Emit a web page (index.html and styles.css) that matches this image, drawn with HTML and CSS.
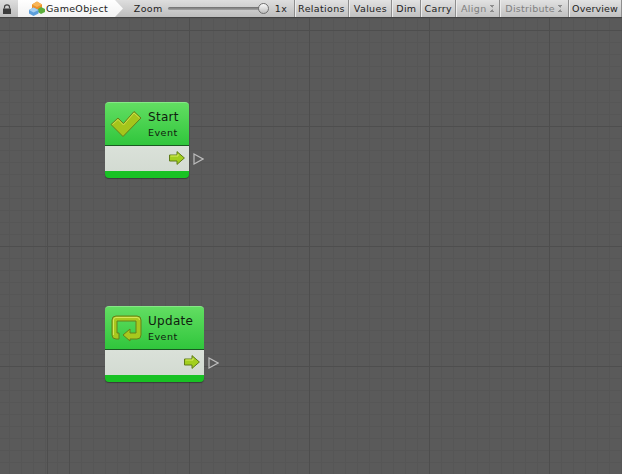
FILE: index.html
```html
<!DOCTYPE html>
<html lang="en">
<head>
<meta charset="utf-8">
<title>Graph</title>
<link rel="stylesheet" href="styles.css">
</head>
<body>
<div class="window">
  <header class="toolbar">
    <div class="lock">
      <svg width="10" height="10" viewBox="0 0 10 10"><path d="M2.500 4.500V3C2.500 1.600 3.500 .8 5 .8s2.500.8 2.500 2.200V4.500" fill="none" stroke="#444" stroke-width="1.200"/><rect x="1" y="4.500" width="8" height="5.500" fill="#3c3c3c"/></svg>
    </div>
    <div class="crumb">
      <svg class="cube" width="16" height="15" viewBox="0 0 16 15">
        <path d="M3 3.500 8 .5 13 3.500V7.500L8 10 3 7.500Z" fill="#ee9128"/>
        <path d="M3 3.500 8 6 13 3.500 8 .5Z" fill="#f8b658"/>
        <path d="M9 8 12 6 16 8V11L12 13 9 11Z" fill="#5cae3c"/>
        <path d="M0 9 4.500 6.500 9.500 9V12.500L4.500 15 0 12.500Z" fill="#5c9fdc"/>
        <path d="M0 9 4.500 11.500 9.500 9 4.500 6.500Z" fill="#a6cff0"/>
      </svg>
      <span class="crumb-label">GameObject</span>
    </div>
    <div class="zoom">
      <span class="zoom-label">Zoom</span>
      <div class="slider"><div class="thumb"></div></div>
      <span class="zoom-value">1x</span>
    </div>
    <button class="tool tool-relations">Relations</button>
    <button class="tool tool-values">Values</button>
    <button class="tool tool-dim">Dim</button>
    <button class="tool tool-carry">Carry</button>
    <button class="tool tool-align off">Align <span class="updown"></span></button>
    <button class="tool tool-distribute off">Distribute <span class="updown"></span></button>
    <button class="tool tool-overview">Overview</button>
  </header>
  <main class="canvas">
    <section class="node node-start">
      <div class="node-head">
        <svg class="node-icon" width="32" height="28" viewBox="0 0 32 28">
          <path d="M1 14.500 8 8l5.500 5.500L24 1.500l7 6.500L13 26.500Z" fill="#a4c51c" stroke="#66801a" stroke-width="1" stroke-linejoin="round"/>
          <path d="M2.500 14.500 8 9.500l5.500 5.500L24 3l5.500 5" fill="none" stroke="#cfe04a" stroke-width="1"/>
        </svg>
        <div class="node-titles">
          <div class="node-title">Start</div>
          <div class="node-sub">Event</div>
        </div>
      </div>
      <div class="node-body">
        <svg class="arrow" width="16" height="14" viewBox="0 0 16 14"><path d="M.5 4H8V.6L15.400 7 8 13.400V10H.5Z" fill="#a2cf1e" stroke="#5f7c17" stroke-width="1" stroke-linejoin="round"/><path d="M1.500 5H9V3" fill="none" stroke="#d8ec60"/></svg>
      </div>
      <div class="node-foot"></div>
      <svg class="port" width="11" height="12" viewBox="0 0 11 12"><path d="M1 1 10 6 1 11Z" fill="none" stroke="#bcbcbc" stroke-width="1.200"/></svg>
    </section>
    <section class="node node-update">
      <div class="node-head">
        <svg class="node-icon" width="32" height="28" viewBox="0 0 32 28">
          <path d="M6 2H27a4 4 0 0 1 4 4V21a4 4 0 0 1-4 4H20V27L13 21 20 15V19H26V7H7V19H9V25H6a4 4 0 0 1-4-4V6a4 4 0 0 1 4-4Z" fill="#a8c81e" stroke="#66801a" stroke-width="1" stroke-linejoin="round"/>
          <path d="M6 3.500H27a2.500 2.500 0 0 1 2.500 2.500M3.500 21V6a2.500 2.500 0 0 1 2.500-2.500" fill="none" stroke="#d6e658" stroke-width="1"/>
        </svg>
        <div class="node-titles">
          <div class="node-title">Update</div>
          <div class="node-sub">Event</div>
        </div>
      </div>
      <div class="node-body">
        <svg class="arrow" width="16" height="14" viewBox="0 0 16 14"><path d="M.5 4H8V.6L15.400 7 8 13.400V10H.5Z" fill="#a2cf1e" stroke="#5f7c17" stroke-width="1" stroke-linejoin="round"/><path d="M1.500 5H9V3" fill="none" stroke="#d8ec60"/></svg>
      </div>
      <div class="node-foot"></div>
      <svg class="port" width="11" height="12" viewBox="0 0 11 12"><path d="M1 1 10 6 1 11Z" fill="none" stroke="#bcbcbc" stroke-width="1.200"/></svg>
    </section>
  </main>
</div>
</body>
</html>
```
FILE: styles.css
```css
* { box-sizing: border-box; }
html, body { margin: 0; padding: 0; }
body { width: 622px; height: 474px; overflow: hidden; background: #5a5a5a; font-family: "DejaVu Sans", sans-serif; }
.window { display: flex; flex-direction: column; width: 622px; height: 474px; }

.toolbar {
  display: flex; align-items: stretch; height: 18px; flex: none;
  background: linear-gradient(#dedede, #bdbdbd);
  border-bottom: 1px solid #444;
  font-size: 9.500px; letter-spacing: .35px; color: #222;
}
.lock { width: 18px; display: flex; align-items: center; justify-content: center; padding: 0 3px 0 0; }
.crumb {
  width: 105px; display: flex; align-items: center; padding-left: 11px;
  background: linear-gradient(#fff, #f2f2f2);
  clip-path: polygon(0 0, 97px 0, 105px 50%, 97px 100%, 0 100%);
}
.cube { flex: none; margin-top: -1px; }
.crumb-label { margin-left: 1px; letter-spacing: .28px; }
.zoom { width: 171px; display: flex; align-items: center; padding-left: 11px; }
.zoom-label { width: 34px; }
.slider { position: relative; width: 96px; height: 3px; border-radius: 2px; background: linear-gradient(#6e6e6e, #a4a4a4); }
.thumb { position: absolute; right: -5px; top: -4px; width: 11px; height: 11px; border-radius: 50%; background: linear-gradient(#fafafa, #bcbcbc); border: 1px solid #707070; }
.zoom-value { margin-left: 11px; }
.tool {
  appearance: none; margin: 0; padding: 0; display: flex; align-items: center; justify-content: center;
  font: inherit; letter-spacing: inherit; color: inherit;
  background: linear-gradient(#e2e2e2, #c0c0c0);
  border: 0; border-left: 1px solid #8e8e8e;
  box-shadow: inset 1px 0 0 #ececec;
}
.tool-relations { width: 55px; }
.tool-values { width: 43px; }
.tool-dim { width: 29px; }
.tool-carry { width: 35px; }
.tool-align { width: 44px; }
.tool-distribute { width: 69px; letter-spacing: .28px; }
.tool-overview { width: 54px; border-right: 1px solid #8e8e8e; letter-spacing: .15px; }
.off { color: #808080; }
.updown { display: inline-block; width: 5px; height: 7px; margin-left: 3px; background:
  linear-gradient(to top right, transparent 50%, #8c8c8c 50%) 0 0/2.500px 3px no-repeat,
  linear-gradient(to top left, transparent 50%, #8c8c8c 50%) 2.500px 0/2.500px 3px no-repeat,
  linear-gradient(to bottom right, transparent 50%, #8c8c8c 50%) 0 4px/2.500px 3px no-repeat,
  linear-gradient(to bottom left, transparent 50%, #8c8c8c 50%) 2.500px 4px/2.500px 3px no-repeat; }

.canvas {
  position: relative; flex: 1;
  background-color: #5a5a5a;
  background-image:
    repeating-linear-gradient(to right, #4e4e4e 0 1px, transparent 1px 120px),
    repeating-linear-gradient(to bottom, #4e4e4e 0 1px, transparent 1px 120px),
    repeating-linear-gradient(to right, #565656 0 1px, transparent 1px 12px),
    repeating-linear-gradient(to bottom, #565656 0 1px, transparent 1px 12px);
  background-position: 69px 0, 0 108px, 9px 0, 0 0;
}

.node {
  position: absolute; left: 105px; height: 76px;
  display: flex; flex-direction: column; color: #10200f;
}
.node-start { top: 84px; width: 84px; }
.node-update { top: 288px; width: 99px; }
.node-head {
  height: 44px; display: flex; padding: 7px 0 0 5px; gap: 6px;
  background: linear-gradient(#62de62, #30c63c);
  border-top: 1px solid #86e886;
  border-bottom: 1px solid #1a5a22;
  border-radius: 4px 4px 0 0;
}
.node-icon { flex: none; }
.node-titles { padding-top: 0; }
.node-title { font-size: 12px; line-height: 15px; letter-spacing: .3px; }
.node-sub { font-size: 9.500px; line-height: 14px; letter-spacing: .5px; margin-top: 1px; }
.node-body {
  height: 25px; display: flex; align-items: center; justify-content: flex-end; padding: 0 4px 2px 0;
  background: linear-gradient(#dae1d9, #d3dbd2);
}
.node-foot { height: 7px; background: #18c224; border-radius: 0 0 4px 4px; box-shadow: 0 1px 1px rgba(0,0,0,.35); }
.port { position: absolute; right: -15px; top: 51px; }
```
